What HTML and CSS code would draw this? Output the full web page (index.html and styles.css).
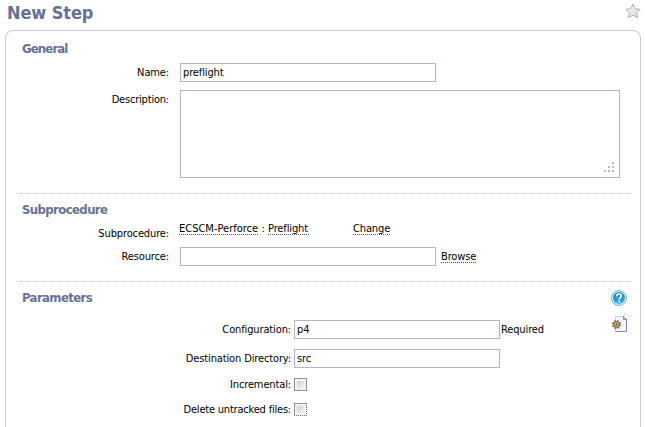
FILE: index.html
```
<!DOCTYPE html>
<html lang="en">
<head>
<meta charset="utf-8">
<title>New Step</title>
<link rel="stylesheet" href="styles.css">
</head>
<body>
<header class="top">
  <h1>New Step</h1>
  <svg class="star" width="16" height="16" viewBox="0 0 16 16"><defs><linearGradient id="sg" x1="0" y1="0" x2="1" y2="1"><stop offset="0" stop-color="#fff"/><stop offset="1" stop-color="#d4d4d4"/></linearGradient></defs><path d="M8 1.200l2.200 4.600 5 .5-3.700 3.400 1.200 5L8 12.200l-4.700 2.500 1.200-5L.8 6.300l5-.5z" fill="url(#sg)" stroke="#b2b2b2"/></svg>
</header>
<main class="panel">
  <section class="section general">
    <h2 class="tight">General</h2>
    <div class="row name-row"><label for="name">Name:</label><input id="name" class="field" type="text" value="preflight"></div>
    <div class="row desc-row"><label class="snug" for="desc">Description:</label>
      <div class="area"><textarea id="desc"></textarea><svg class="grip" width="10" height="10" fill="#b9b9b9" shape-rendering="crispEdges"><path d="M8 0h2v2H8zM4 4h2v2H4zM8 4h2v2H8zM0 8h2v2H0zM4 8h2v2H4zM8 8h2v2H8z"/></svg></div>
    </div>
  </section>
  <section class="section sub">
    <h2>Subprocedure</h2>
    <div class="row sub-row"><span class="label">Subprocedure:</span><div class="links"><span class="link project">ECSCM-Perforce</span><span class="colon">:</span><span class="link procedure">Preflight</span><span class="link change">Change</span></div></div>
    <div class="row resource-row"><label for="res">Resource:</label><input id="res" class="field" type="text"><span class="link browse">Browse</span></div>
  </section>
  <section class="section params">
    <div class="fields">
      <h2>Parameters</h2>
      <div class="row config-row"><label for="conf">Configuration:</label><input id="conf" class="field" type="text" value="p4"><span class="required">Required</span></div>
      <div class="row dest-row"><label for="dest">Destination Directory:</label><input id="dest" class="field" type="text" value="src"></div>
      <div class="row check-row"><label for="inc">Incremental:</label><input id="inc" class="check" type="checkbox"></div>
      <div class="row check-row last"><label class="snug" for="del">Delete untracked files:</label><input id="del" class="check focus" type="checkbox"></div>
    </div>
    <div class="tools">
      <svg width="16" height="16" viewBox="0 0 16 16"><defs><linearGradient id="hg" x1="0" y1="0" x2="0" y2="1"><stop offset="0" stop-color="#1879c4"/><stop offset="1" stop-color="#35b5ef"/></linearGradient></defs><circle cx="8" cy="8" r="7.4" fill="#fff" stroke="#58a9d9"/><circle cx="8" cy="8" r="6" fill="url(#hg)"/><path d="M5.7 6.2C5.8 3.2 10.4 3.3 10.2 6c-.1 1.5-2 1.7-2 3.4M8.2 10.8v1.6" fill="none" stroke="#fff" stroke-width="1.6"/></svg>
      <svg width="16" height="16" viewBox="0 0 16 16"><path d="M4.500.5h8l3 3v12h-11z" fill="#f3f6fd"/><path d="M4.500 15.500V.5h8" fill="none" stroke="#c7d1e9"/><path d="M12.500.5l3 3v12h-11M12.500.5v3h3" fill="none" stroke="#7b8db5"/><circle cx="5.500" cy="8.500" r="3.900" fill="none" stroke="#76654c" stroke-width="1.500" stroke-dasharray="1.600 1.463"/><circle cx="5.500" cy="8.500" r="2.700" fill="#d9c292" stroke="#8b7655" stroke-width="1.600"/><circle cx="5.500" cy="8.500" r=".9" fill="#4d3e2c"/></svg>
    </div>
  </section>
</main>
</body>
</html>
```
FILE: styles.css
```
* { box-sizing: border-box; }
body {
  margin: 0;
  background: #fff;
  color: #000;
  font: 11px/14px "DejaVu Sans Condensed", "DejaVu Sans", sans-serif;
  font-stretch: condensed;
  letter-spacing: -0.13px;
}
h1, h2 { margin: 0; color: #667294; font-weight: bold; white-space: nowrap; }
h1 { font-size: 18px; line-height: 24px; letter-spacing: -0.1px; }
h2 { font-size: 13px; line-height: 16px; letter-spacing: -0.6px; padding-left: 5px; }
.tight { letter-spacing: -0.85px; }
.top { display: flex; justify-content: space-between; height: 30px; padding: 1px 4px 0 7px; }
.star { margin-top: 2px; }
.panel { width: 636px; height: 397px; margin-left: 5px; border: 1px solid #ccc; border-bottom: 0; border-radius: 8px 8px 0 0; padding: 0 9px 0 11px; }
.section { border-bottom: 1px dotted #c4c4c4; }
.general { height: 163px; padding-top: 10px; }
.sub { height: 88px; padding-top: 8px; }
.params { display: flex; justify-content: space-between; padding-top: 8px; border: 0; }
.row { display: flex; white-space: nowrap; }
label, .label { width: 152px; margin-right: 11px; padding-top: 3px; text-align: right; flex: none; }
.snug { letter-spacing: -0.2px; }
.field { width: 256px; height: 19px; border: 1px solid #b3b5c7; padding: 0 2px; margin: 0; font: inherit; letter-spacing: inherit; color: #000; background: #fff; outline: 0; }
.name-row { margin-top: 6px; }
.desc-row { margin-top: 8px; }
.area { position: relative; width: 440px; height: 88px; }
textarea { display: block; width: 100%; height: 100%; border: 1px solid #b3b5c7; resize: none; padding: 2px; margin: 0; font: inherit; overflow: hidden; }
.grip { position: absolute; right: 6px; bottom: 6px; }
.sub-row { height: 29px; }
.sub-row .label { padding-top: 9px; margin-right: 10px; }
.links { display: flex; padding-top: 4px; }
.link { height: 13px; border-bottom: 1px dotted #555; line-height: 14px; }
.project { width: 79px; letter-spacing: 0; }
.colon { width: 10px; text-align: center; }
.procedure { width: 41px; }
.change { width: 37px; margin-left: 44px; }
.browse { width: 35px; margin: 3px 0 0 5px; }
.fields h2 { margin-bottom: 14px; }
.fields label { width: 274px; margin-right: 3px; }
.fields .field { width: 206px; }
.required { padding: 3px 0 0 1px; }
.dest-row { margin-top: 10px; }
.check-row { margin-top: 10px; height: 13px; }
.last { margin-top: 12px; }
.fields .check-row label { padding-top: 0; line-height: 13px; }
.check { appearance: none; width: 13px; height: 13px; margin: 0; border: 1px solid #909090; background: linear-gradient(135deg, #c9ccd2, #f6f6f6) 2px 2px / 7px 7px no-repeat #f4f4f4; }
.focus { border-right: 1px dotted #666; border-bottom: 1px dotted #666; }
.tools { display: flex; flex-direction: column; gap: 10px; padding-right: 4px; }
```
